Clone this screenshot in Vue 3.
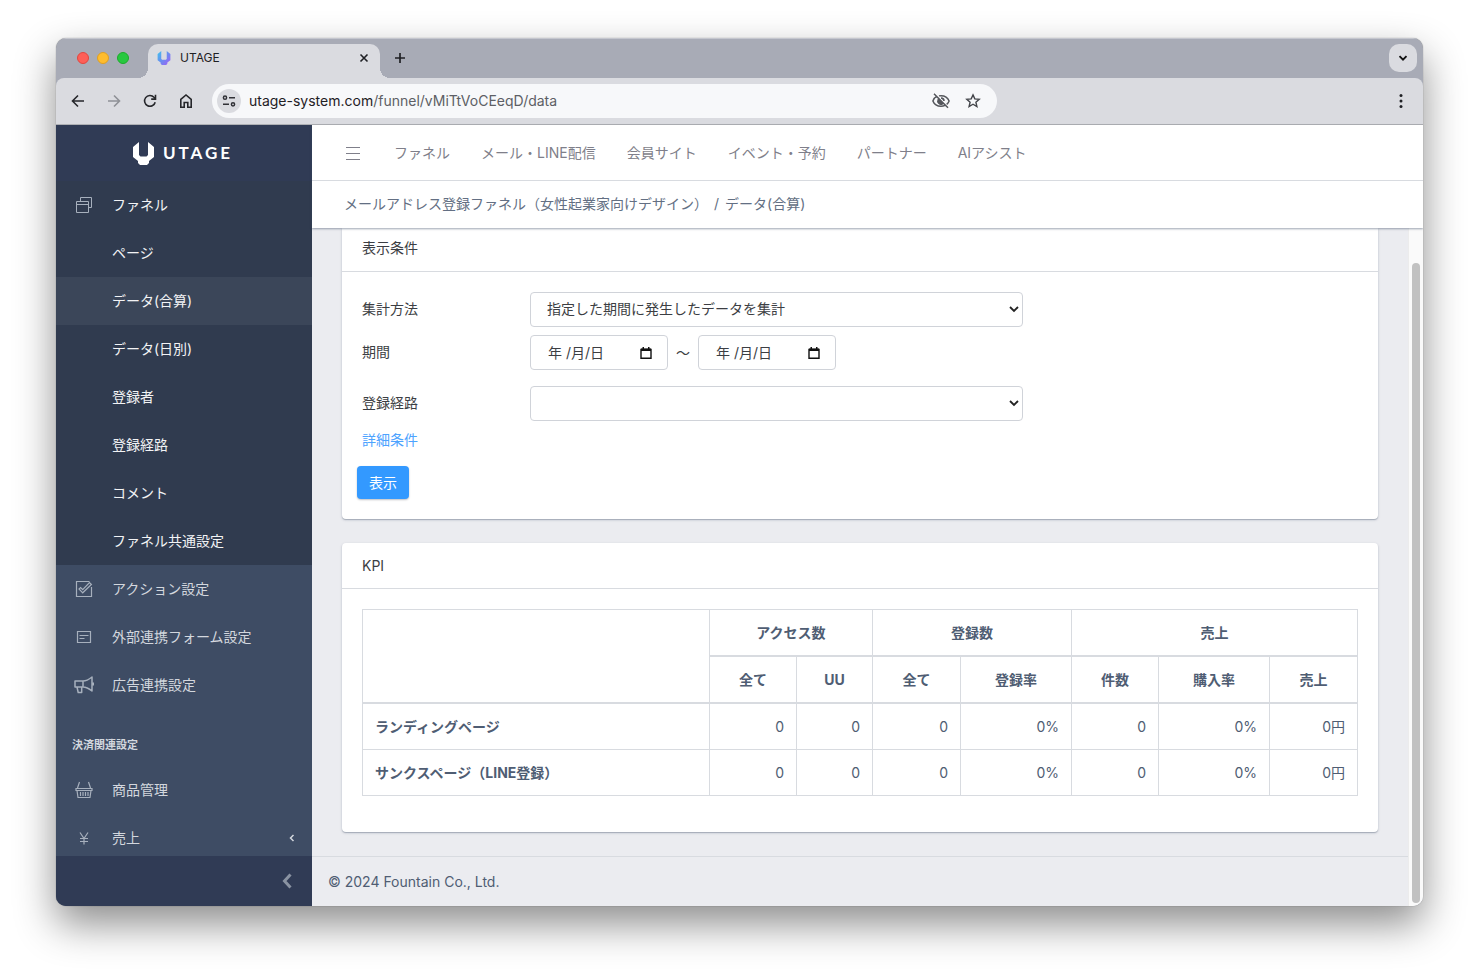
<script setup>
import { ref } from 'vue'

const topLinks = ['ファネル', 'メール・LINE配信', '会員サイト', 'イベント・予約', 'パートナー', 'AIアシスト']
const funnelItems = ['ページ', 'データ(合算)', 'データ(日別)', '登録者', '登録経路', 'コメント', 'ファネル共通設定']
const activeItem = 'データ(合算)'

const method = ref('period')
const route = ref('')
const dateFrom = ref('年 /月/日')
const dateTo = ref('年 /月/日')

const kpiRows = [
  { name: 'ランディングページ', cells: ['0', '0', '0', '0%', '0', '0%', '0円'] },
  { name: 'サンクスページ（LINE登録）', cells: ['0', '0', '0', '0%', '0', '0%', '0円'] },
]
</script>

<template>
  <div class="desktop">
    <div class="window">
      <div class="tabstrip">
        <div class="lights">
          <button class="light red" aria-label="閉じる"></button>
          <button class="light yellow" aria-label="最小化"></button>
          <button class="light green" aria-label="最大化"></button>
        </div>
        <div class="tab">
          <svg class="favicon" viewBox="0 0 21 23" aria-hidden="true">
            <defs>
              <linearGradient id="fav" x1="0" y1="0" x2="1" y2="1">
                <stop offset="0" stop-color="#3fc3ee" />
                <stop offset="0.5" stop-color="#6a8cf0" />
                <stop offset="1" stop-color="#a35cf5" />
              </linearGradient>
            </defs>
            <path fill="url(#fav)" d="M6 0v13l1.500 1.500h6L15 13V0l6 5v10l-5 4v2l-2 2H7l-2-2v-2l-5-4V5z" />
          </svg>
          <span class="tab-title">UTAGE</span>
          <button class="tab-close" aria-label="タブを閉じる">
            <svg viewBox="0 0 10 10" width="10" height="10"><path d="M1.500 1.500l7 7M8.500 1.500l-7 7" stroke="#1f2024" stroke-width="1.600" /></svg>
          </button>
        </div>
        <button class="new-tab" aria-label="新しいタブ">
          <svg viewBox="0 0 12 12" width="12" height="12"><path d="M6 1v10M1 6h10" stroke="#1f2024" stroke-width="1.700" /></svg>
        </button>
        <button class="tab-search" aria-label="タブを検索">
          <svg viewBox="0 0 10 10" width="10" height="10"><path d="M1.500 3.200L5 6.700l3.500-3.500" fill="none" stroke="#111" stroke-width="1.900" /></svg>
        </button>
      </div>

      <div class="toolbar">
        <button class="tool" aria-label="戻る">
          <svg viewBox="0 0 16 16" width="16" height="16" fill="none" stroke="#26272b" stroke-width="1.600"><path d="M14 8H3M8 2.500L2.500 8 8 13.500" /></svg>
        </button>
        <button class="tool" aria-label="進む">
          <svg viewBox="0 0 16 16" width="16" height="16" fill="none" stroke="#8f9196" stroke-width="1.600"><path d="M2 8h11M8 2.500L13.500 8 8 13.500" /></svg>
        </button>
        <button class="tool" aria-label="再読み込み">
          <svg viewBox="0 0 16 16" width="16" height="16" fill="none" stroke="#26272b" stroke-width="1.600"><path d="M13.200 9.200A5.400 5.400 0 1 1 12 4.300l1.500 1.600" /><path d="M13.500 1.800v4.300H9.200" /></svg>
        </button>
        <button class="tool" aria-label="ホーム">
          <svg viewBox="0 0 16 16" width="16" height="16" fill="none" stroke="#26272b" stroke-width="1.600"><path d="M2.800 6.300L8 2l5.200 4.300v7.900H9.800V9.500H6.200v4.700H2.800z" /></svg>
        </button>
        <div class="omnibox">
          <button class="site-info" aria-label="サイト情報">
            <svg viewBox="0 0 14 14" width="14" height="14" fill="none" stroke="#303136" stroke-width="1.500"><circle cx="3" cy="3.700" r="1.600" /><path d="M7 3.700h6M1 10.300h6" /><circle cx="11" cy="10.300" r="1.600" /></svg>
          </button>
          <div class="url"><span class="host">utage-system.com</span><span>/funnel/vMiTtVoCEeqD/data</span></div>
          <button class="omni-btn" aria-label="サードパーティCookieをブロック中">
            <svg viewBox="0 0 20 20" width="20" height="20" fill="none" stroke="#55575c" stroke-width="1.500"><path d="M6 5.200C3.900 6.300 2.600 8 1.900 10c1.300 3.300 4.400 5.300 8.100 5.300 1.500 0 2.800-.3 4-.9M8 4.900c.7-.2 1.300-.2 2-.2 3.700 0 6.800 2 8.100 5.300-.5 1.300-1.300 2.400-2.400 3.300M3 2.800l14 14" /><path d="M7.200 8.500a3.200 3.200 0 0 0 4.300 4.300zM10 7a3 3 0 0 1 3 3" fill="#55575c" /></svg>
          </button>
          <button class="omni-btn" aria-label="ブックマーク">
            <svg viewBox="0 0 16 16" width="16" height="16" fill="none" stroke="#44464b" stroke-width="1.400"><path d="M8 1.900l1.800 4 4.400.4-3.300 2.900 1 4.300L8 11.200l-3.900 2.300 1-4.300-3.300-2.900 4.400-.4z" /></svg>
          </button>
        </div>
        <button class="kebab" aria-label="メニュー">
          <svg viewBox="0 0 4 16" width="4" height="16" fill="#1f2024"><circle cx="2" cy="2.500" r="1.500" /><circle cx="2" cy="8" r="1.500" /><circle cx="2" cy="13.500" r="1.500" /></svg>
        </button>
      </div>

      <div class="page">
        <aside class="sidebar">
          <a class="brand" href="#" aria-label="UTAGE">
            <svg viewBox="0 0 21 23" width="21" height="23" fill="#fff" aria-hidden="true"><path d="M6 0v13l1.500 1.500h6L15 13V0l6 5v10l-5 4v2l-2 2H7l-2-2v-2l-5-4V5z" /></svg>
            <span class="brand-name">UTAGE</span>
          </a>
          <nav class="side-nav">
            <div class="group">
              <a class="side-link open" href="#">
                <svg class="side-icon" viewBox="0 0 20 20" fill="none" stroke="currentColor"><path d="M2.500 6.500h12v11h-12zM2.500 9.500h12M6.500 6V2.500h11v10H15" /></svg>
                <span class="side-text">ファネル</span>
              </a>
              <a v-for="item in funnelItems" :key="item" class="side-link sub" :class="{ active: item === activeItem }" href="#">
                <span class="side-text">{{ item }}</span>
              </a>
            </div>
            <a class="side-link" href="#">
              <svg class="side-icon" viewBox="0 0 20 20" fill="none" stroke="currentColor"><path d="M17.500 8v9.500h-15v-15h13M8.700 13.800L5 10l1.600-1.500 2.100 2.100 6.800-7 1.900 1.900z" stroke-width="1.200" /></svg>
              <span class="side-text">アクション設定</span>
            </a>
            <a class="side-link" href="#">
              <svg class="side-icon" viewBox="0 0 20 20" fill="none" stroke="currentColor"><path d="M3.500 4.500h13v11h-13zM5.500 8.500h9M5.500 11.500h5" stroke-width="1.200" /></svg>
              <span class="side-text">外部連携フォーム設定</span>
            </a>
            <a class="side-link" href="#">
              <svg class="side-icon" viewBox="0 0 20 20" fill="none" stroke="currentColor" stroke-width="1.500" stroke-linejoin="round"><path d="M1 6h8c4 0 6.500-2 9-4v14c-2.500-2-5-4-9-4H1zM9 6v6M3 12l1.200 5.500h3.500V12M19.300 7.500v3" /></svg>
              <span class="side-text">広告連携設定</span>
            </a>
            <div class="side-title">決済関連設定</div>
            <a class="side-link" href="#">
              <svg class="side-icon" viewBox="0 0 20 20" fill="none" stroke="currentColor"><path d="M2 8.500h16v2H2zM3 10.500l1 7h12l1-7M5.500 2L3.500 8M14.500 2l2 6M6.500 12v4M9 12v4M11.500 12v4M14 12v4" stroke-width="1.200" /></svg>
              <span class="side-text">商品管理</span>
            </a>
            <a class="side-link" href="#">
              <svg class="side-icon" viewBox="0 0 20 20" fill="none" stroke="currentColor" stroke-width="1.200"><path d="M6 4.500l4 6 4-6M10 10.500v6M6 10.500h8M6 13.500h8" /></svg>
              <span class="side-text">売上</span>
              <svg class="caret" viewBox="0 0 8 8" width="8" height="8" fill="none" stroke="currentColor" stroke-width="1.500"><path d="M5.500 1L2.500 4l3 3" /></svg>
            </a>
          </nav>
          <button class="minimizer" aria-label="サイドバーを縮小">
            <svg viewBox="0 0 10 16" width="10" height="16" fill="none" stroke="#8a93a2" stroke-width="3"><path d="M8.500 1.500L2.500 8l6 6.500" /></svg>
          </button>
        </aside>

        <div class="main">
          <header class="top">
            <div class="top-nav">
              <button class="burger" aria-label="メニュー切替">
                <svg viewBox="0 0 14 14" width="14" height="14" stroke="#7f7f8a" stroke-width="1.200"><path d="M0 1.500h14M0 7.500h14M0 13.500h14" /></svg>
              </button>
              <a v-for="link in topLinks" :key="link" href="#">{{ link }}</a>
            </div>
            <nav class="crumbs">
              <a href="#">メールアドレス登録ファネル（女性起業家向けデザイン）</a>
              <span>/</span>
              <a href="#">データ(合算)</a>
            </nav>
          </header>

          <div class="scroll-area">
            <div class="content">
              <main class="cards">
                <section class="card first">
                  <h2 class="card-head">表示条件</h2>
                  <form class="conditions" @submit.prevent>
                    <div class="row">
                      <label for="method">集計方法</label>
                      <div class="select-wrap">
                        <select id="method" v-model="method">
                          <option value="period">指定した期間に発生したデータを集計</option>
                        </select>
                        <svg class="arrow" viewBox="0 0 10 8" width="10" height="8"><path d="M1 2l4 4 4-4" fill="none" stroke="#222" stroke-width="1.800" /></svg>
                      </div>
                    </div>
                    <div class="row">
                      <label for="from">期間</label>
                      <div class="dates">
                        <div class="date">
                          <input id="from" v-model="dateFrom" type="text" />
                          <svg viewBox="0 0 12 12" width="12" height="12"><path d="M1 2.500h10v8.800H1z" fill="none" stroke="#111" stroke-width="1.400" /><path d="M1 1.500h10V4H1zM2.500 0H4v2H2.500zM8 0h1.500v2H8z" fill="#111" /></svg>
                        </div>
                        <span class="tilde">〜</span>
                        <div class="date">
                          <input v-model="dateTo" type="text" aria-label="期間の終わり" />
                          <svg viewBox="0 0 12 12" width="12" height="12"><path d="M1 2.500h10v8.800H1z" fill="none" stroke="#111" stroke-width="1.400" /><path d="M1 1.500h10V4H1zM2.500 0H4v2H2.500zM8 0h1.500v2H8z" fill="#111" /></svg>
                        </div>
                      </div>
                    </div>
                    <div class="row spaced">
                      <label for="route">登録経路</label>
                      <div class="select-wrap">
                        <select id="route" v-model="route">
                          <option value=""></option>
                        </select>
                        <svg class="arrow" viewBox="0 0 10 8" width="10" height="8"><path d="M1 2l4 4 4-4" fill="none" stroke="#222" stroke-width="1.800" /></svg>
                      </div>
                    </div>
                    <a class="detail" href="#">詳細条件</a>
                    <button class="submit" type="submit">表示</button>
                  </form>
                </section>

                <section class="card">
                  <h2 class="card-head">KPI</h2>
                  <div class="kpi">
                    <table>
                      <colgroup>
                        <col />
                        <col class="w-n" />
                        <col class="w-s" />
                        <col class="w-m" />
                        <col class="w-l" />
                        <col class="w-n" />
                        <col class="w-l" />
                        <col class="w-m" />
                      </colgroup>
                      <thead>
                        <tr>
                          <th rowspan="2"></th>
                          <th colspan="2">アクセス数</th>
                          <th colspan="2">登録数</th>
                          <th colspan="3">売上</th>
                        </tr>
                        <tr>
                          <th>全て</th>
                          <th>UU</th>
                          <th>全て</th>
                          <th>登録率</th>
                          <th>件数</th>
                          <th>購入率</th>
                          <th>売上</th>
                        </tr>
                      </thead>
                      <tbody>
                        <tr v-for="row in kpiRows" :key="row.name">
                          <th scope="row">{{ row.name }}</th>
                          <td v-for="(cell, i) in row.cells" :key="i">{{ cell }}</td>
                        </tr>
                      </tbody>
                    </table>
                  </div>
                </section>
              </main>
              <footer class="foot">© 2024 Fountain Co., Ltd.</footer>
            </div>
            <div class="scrollbar"><div class="thumb"></div></div>
          </div>
        </div>
      </div>
    </div>
  </div>
</template>

<style>
body {
  margin: 0;
  background: #fff;
}
</style>

<style scoped>
.desktop,
.desktop * {
  box-sizing: border-box;
}
.desktop {
  display: flex;
  min-height: 100vh;
  padding: 38px 56px 74px;
  font-family: Inter, 'Noto Sans CJK JP', sans-serif;
  font-size: 14px;
  line-height: 21px;
  color: #3c4b64;
}
a {
  color: inherit;
  text-decoration: none;
}
button {
  display: flex;
  align-items: center;
  justify-content: center;
  flex: none;
  padding: 0;
  border: 0;
  background: none;
  font: inherit;
}
svg {
  flex: none;
  display: block;
}
.window {
  flex: 1;
  min-width: 0;
  display: flex;
  flex-direction: column;
  border-radius: 10px;
  overflow: hidden;
  background: #a8abb6;
  box-shadow: 0 0 1px rgba(0, 0, 0, 0.5), 0 18px 40px rgba(0, 0, 0, 0.45);
}

/* browser chrome */
.tabstrip {
  display: flex;
  align-items: center;
  height: 40px;
  padding: 0 6px 0 21px;
  box-shadow: inset 0 1px #c4c6ce;
}
.lights {
  display: flex;
  gap: 8px;
  margin-right: 19px;
}
.light {
  width: 12px;
  height: 12px;
  border-radius: 50%;
}
.red {
  background: #fe5f57;
  border: 1px solid #e2463f;
}
.yellow {
  background: #febc2e;
  border: 1px solid #dfa023;
}
.green {
  background: #28c840;
  border: 1px solid #1dac2b;
}
.tab {
  position: relative;
  align-self: flex-end;
  display: flex;
  align-items: center;
  width: 232px;
  height: 34px;
  padding: 0 10px 6px 9px;
  border-radius: 10px 10px 0 0;
  background: #dadbe0;
  color: #1f2024;
  font-size: 12px;
}
.tab::before,
.tab::after {
  content: '';
  position: absolute;
  bottom: 0;
  width: 10px;
  height: 10px;
}
.tab::before {
  right: 100%;
  background: radial-gradient(circle at 0 0, transparent 10px, #dadbe0 10px);
}
.tab::after {
  left: 100%;
  background: radial-gradient(circle at 100% 0, transparent 10px, #dadbe0 10px);
}
.favicon {
  width: 14px;
  height: 14px;
  margin-right: 9px;
}
.tab-title {
  padding-bottom: 2px;
}
.tab-close {
  width: 12px;
  height: 16px;
  margin-left: auto;
}
.new-tab {
  width: 28px;
  height: 28px;
  margin-left: 6px;
}
.tab-search {
  width: 28px;
  height: 28px;
  margin-left: auto;
  border-radius: 10px;
  background: #dadbe0;
}
.toolbar {
  display: flex;
  align-items: center;
  gap: 20px;
  height: 47px;
  padding: 0 20px 1px 14px;
  border-bottom: 1px solid #aeb0b4;
  border-radius: 8px 8px 0 0;
  background: #dadbe0;
}
.tool {
  width: 16px;
  height: 28px;
}
.omnibox {
  display: flex;
  align-items: center;
  flex: 0 1 785px;
  min-width: 0;
  height: 34px;
  margin-left: -2px;
  padding: 0 16px 0 5px;
  border-radius: 17px;
  background: #f7f8fa;
}
.site-info {
  width: 24px;
  height: 24px;
  margin-right: 8px;
  border-radius: 50%;
  background: #dadbe0;
}
.url {
  flex: 1;
  min-width: 0;
  overflow: hidden;
  white-space: nowrap;
  color: #5d5f65;
}
.host {
  color: #1f2024;
}
.omni-btn {
  min-width: 16px;
  height: 24px;
  margin-left: 14px;
}
.kebab {
  width: 4px;
  height: 28px;
  margin-left: auto;
}

/* sidebar */
.page {
  flex: 1;
  display: flex;
}
.sidebar {
  display: flex;
  flex-direction: column;
  flex: none;
  width: 256px;
  background: #3e4c64;
  color: #d3d7de;
}
.brand {
  display: flex;
  align-items: center;
  justify-content: center;
  gap: 9px;
  height: 56px;
  padding-right: 2px;
  background: #303b55;
  color: #fff;
}
.brand-name {
  padding-bottom: 2px;
  font-family: Lato, sans-serif;
  font-size: 17px;
  font-weight: 700;
  letter-spacing: 3px;
}
.side-nav {
  flex: 1 1 0;
  min-height: 0;
  overflow: hidden;
}
.group {
  background: #303b4f;
  color: #f2f3f5;
}
.side-link {
  display: flex;
  align-items: center;
  height: 48px;
  padding: 0 16px 0 18px;
  white-space: nowrap;
}
.side-icon {
  width: 20px;
  height: 20px;
  margin-right: 18px;
  color: #a7b0bd;
}
.side-text {
  padding-bottom: 2px;
}
.sub {
  padding-left: 56px;
}
.active {
  background: #3b4659;
}
.side-title {
  margin-top: 16px;
  padding: 10px 16px;
  font-size: 11px;
  font-weight: 700;
}
.caret {
  margin-left: auto;
}
.minimizer {
  justify-content: flex-end;
  height: 50px;
  padding-right: 20px;
  background: #303b55;
}

/* main column */
.main {
  flex: 1;
  min-width: 0;
  display: flex;
  flex-direction: column;
  background: #ebecf0;
}
.top {
  position: relative;
  background: #fff;
  box-shadow: 0 1px 2px rgba(60, 75, 100, 0.5);
}
.top-nav {
  display: flex;
  align-items: center;
  gap: 31px;
  height: 56px;
  padding-left: 34px;
  border-bottom: 1px solid #d8dbe0;
  color: #7f7f8a;
  white-space: nowrap;
}
.burger {
  margin-right: 3px;
}
.crumbs {
  display: flex;
  align-items: center;
  gap: 6px;
  height: 47px;
  padding: 0 32px 3px;
  color: #636f83;
  white-space: nowrap;
}
.scroll-area {
  flex: 1;
  display: flex;
}
.content {
  flex: 1;
  min-width: 0;
  display: flex;
  flex-direction: column;
}
.cards {
  display: flex;
  flex-direction: column;
  gap: 24px;
  padding: 0 30px 24px;
}
.card {
  border-radius: 4px;
  background: #fff;
  box-shadow: 0 1px 1px rgba(60, 75, 100, 0.3), 0 1px 3px rgba(60, 75, 100, 0.2);
}
.first {
  border-radius: 0 0 4px 4px;
}
.card-head {
  margin: 0;
  padding: 12px 20px;
  border-bottom: 1px solid #d8dbe0;
  color: #3c3e43;
  font-size: 14px;
  font-weight: 400;
}
.first .card-head {
  padding: 9px 20px 13px;
}
.conditions {
  display: flex;
  flex-direction: column;
  gap: 8px;
  padding: 20px 15px;
  color: #3c3e43;
}
.row {
  display: grid;
  grid-template-columns: 168px minmax(0, 1fr) 335px;
  align-items: center;
  padding: 0 5px;
}
.row label {
  padding-bottom: 2px;
}
.spaced {
  margin-top: 8px;
}
.select-wrap,
.date {
  position: relative;
}
select,
input {
  display: block;
  width: 100%;
  height: 35px;
  padding: 0 16px 2px;
  border: 1px solid #d0d3d9;
  border-radius: 4px;
  background: #fff;
  color: #3c3e43;
  font: inherit;
  appearance: none;
}
.arrow {
  position: absolute;
  top: 13px;
  right: 4px;
  pointer-events: none;
}
.dates {
  display: flex;
  align-items: center;
}
.date {
  width: 138px;
}
.date input {
  padding-left: 17px;
}
.date svg {
  position: absolute;
  top: 12px;
  right: 16px;
}
.tilde {
  width: 30px;
  text-align: center;
}
.detail {
  align-self: flex-start;
  padding-left: 5px;
  color: #4da3ff;
}
.submit {
  align-self: flex-start;
  width: 52px;
  height: 33px;
  margin-top: 8px;
  border-radius: 4px;
  background: #3399ff;
  box-shadow: 0 1px 2px rgba(0, 0, 21, 0.25);
  color: #fff;
}
.kpi {
  padding: 20px 20px 36px;
}
table {
  width: 100%;
  table-layout: fixed;
  border-collapse: collapse;
  color: #4f5d73;
}
.w-s {
  width: 76px;
}
.w-n {
  width: 87px;
}
.w-m {
  width: 88px;
}
.w-l {
  width: 111px;
}
th,
td {
  height: 46px;
  padding: 0 12px;
  border: 1px solid #d8dbe0;
  text-align: right;
}
th {
  font-weight: 700;
}
thead th {
  border-bottom-width: 2px;
  text-align: center;
}
thead tr + tr th,
tbody tr:first-child th {
  height: 47px;
}
tbody th {
  text-align: left;
}
.foot {
  display: flex;
  align-items: center;
  height: 50px;
  margin-top: auto;
  padding: 0 16px;
  border-top: 1px solid #d8dbe0;
  color: #4f5d73;
}
.scrollbar {
  display: flex;
  width: 15px;
  padding: 35px 3px 3px;
  border-left: 1px solid #ececec;
  background: #fafafa;
}
.thumb {
  flex: 1;
  border-radius: 4px;
  background: #c1c1c1;
}
</style>
